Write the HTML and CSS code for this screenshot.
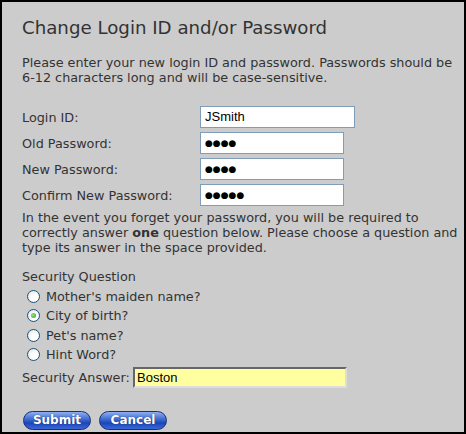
FILE: index.html
```html
<!DOCTYPE html>
<html>
<head>
<meta charset="utf-8">
<link rel="stylesheet" href="styles.css">
</head>
<body>
<div class="frame">
  <h1 class="title">Change Login ID and/or Password</h1>
  <p class="intro">Please enter your new login ID and password. Passwords should be 6-12 characters long and will be case-sensitive.</p>
  <div class="fields">
    <div class="row"><label class="lbl">Login ID:</label><div class="box wide">JSmith</div></div>
    <div class="row"><label class="lbl">Old Password:</label><div class="box dots">●●●●</div></div>
    <div class="row"><label class="lbl">New Password:</label><div class="box dots">●●●●</div></div>
    <div class="row"><label class="lbl">Confirm New Password:</label><div class="box dots">●●●●●</div></div>
  </div>
  <p class="note">In the event you forget your password, you will be required to correctly answer <b>one</b> question below. Please choose a question and type its answer in the space provided.</p>
  <div class="sq">Security Question</div>
  <div class="radios">
    <div class="opt"><span class="radio"></span>Mother's maiden name?</div>
    <div class="opt"><span class="radio on"></span>City of birth?</div>
    <div class="opt"><span class="radio"></span>Pet's name?</div>
    <div class="opt"><span class="radio"></span>Hint Word?</div>
  </div>
  <div class="answer"><span class="lbl2">Security Answer:</span><div class="ansbox">Boston</div></div>
  <div class="buttons">
    <span class="btn">Submit</span>
    <span class="btn">Cancel</span>
  </div>
</div>
</body>
</html>
```
FILE: styles.css
```css
html, body { margin: 0; padding: 0; background: #fff; }
.frame {
  box-sizing: border-box;
  width: 466px;
  height: 434px;
  background: #cccccc;
  border: 2px solid #000;
  padding: 0 6px 0 20px;
  font-family: "DejaVu Sans", Verdana, sans-serif;
  font-size: 12.8px;
  color: #333;
}
.title {
  font-size: 18.2px;
  font-weight: normal;
  margin: 15px 0 0;
  line-height: 22px;
  color: #333;
}
.intro {
  margin: 16px 0 0;
  line-height: 15px;
}
.fields { margin-top: 19px; }
.row {
  display: flex;
  align-items: center;
  height: 26px;
}
.lbl { width: 178px; }
.box {
  box-sizing: border-box;
  width: 144px;
  height: 22px;
  background: #fff;
  border: 1px solid #7f9db9;
  font-family: "Liberation Sans", Arial, sans-serif;
  font-size: 13px;
  color: #000;
  padding: 0 4px;
  line-height: 20px;
}
.box.wide { width: 155px; }
.box.dots { font-size: 9px; font-family: "DejaVu Sans", sans-serif; }
.note {
  margin: 2px 0 0;
  line-height: 15px;
}
.sq { margin-top: 14px; line-height: 15px; }
.radios { margin-top: 3px; }
.opt {
  display: flex;
  align-items: center;
  height: 19.3px;
  padding-left: 5px;
}
.radio {
  box-sizing: border-box;
  width: 13px;
  height: 13px;
  border-radius: 50%;
  border: 1px solid #1c5180;
  background: radial-gradient(circle at 60% 60%, #fff 30%, #dcdcd6 100%);
  margin-right: 6px;
  position: relative;
}
.radio.on::after {
  content: "";
  position: absolute;
  left: 3px; top: 3px;
  width: 5px; height: 5px;
  border-radius: 50%;
  background: radial-gradient(circle at 40% 40%, #a0e080, #21a121);
}
.answer {
  display: flex;
  align-items: center;
  margin-top: 3px;
}
.lbl2 { width: 111px; white-space: nowrap; }
.ansbox {
  box-sizing: border-box;
  width: 214px;
  height: 21px;
  background: #ffffa0;
  border: 2px solid;
  border-color: #666 #ddd #ddd #666;
  font-family: "Liberation Sans", Arial, sans-serif;
  font-size: 13px;
  color: #000;
  padding: 0 2px;
  line-height: 17px;
}
.buttons {
  display: flex;
  gap: 8px;
  margin-top: 23px;
  padding-left: 1px;
}
.btn {
  box-sizing: border-box;
  width: 68px;
  height: 19px;
  border-radius: 10px;
  background: linear-gradient(#8fb0f0 0%, #4a78d8 35%, #1c46b8 65%, #3a68d8 100%);
  border: 1px solid #1a2f78;
  color: #fff;
  font-weight: bold;
  font-size: 12px;
  text-align: center;
  line-height: 17px;
  font-family: "DejaVu Sans", Verdana, sans-serif;
  text-shadow: 0 0 1px #102060;
}
```
